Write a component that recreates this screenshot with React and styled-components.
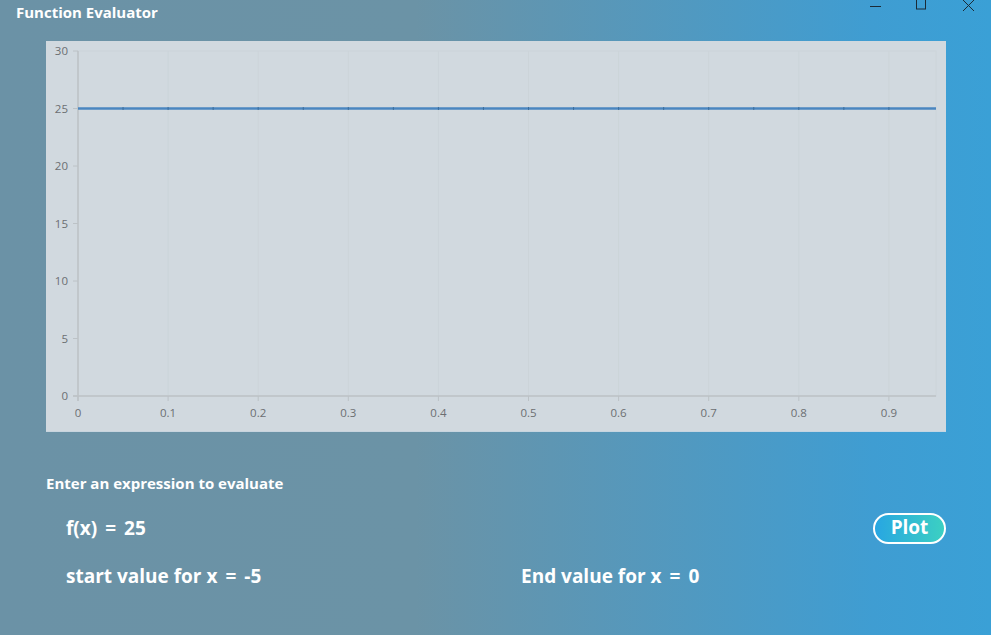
import React from 'react';
import styled, { createGlobalStyle } from 'styled-components';

const GlobalStyle = createGlobalStyle`
  html, body {
    margin: 0;
    padding: 0;
  }
  body {
    font-family: 'Open Sans', 'Noto Sans', sans-serif;
  }
`;

// Window

const Window = styled.div`
  width: 991px;
  height: 635px;
  overflow: hidden;
  background: linear-gradient(90deg, #6b92a6 0%, #6b93a6 42%, #3f9dd2 88%, #3aa0d6 100%);
  display: flex;
  flex-direction: column;
`;

const TitleBar = styled.div`
  height: 41px;
  display: flex;
  align-items: flex-start;
  justify-content: space-between;
`;

const Title = styled.h1`
  margin: 2px 0 0 16px;
  font-size: 15px;
  font-weight: 700;
  color: #fff;
`;

const Controls = styled.div`
  display: flex;
  align-items: flex-start;
`;

const ControlButton = styled.button`
  width: 46px;
  height: 20px;
  padding: 0;
  border: none;
  background: transparent;
  display: flex;
  align-items: flex-start;
  justify-content: center;
  color: #1b2b36;
`;

const ChartPanel = styled.div`
  margin-left: 46px;
  width: 900px;
  height: 390px;
  background: #d1d9df;
  box-shadow: 0 1px 0 rgba(210, 220, 228, 0.9);
`;

const Form = styled.section`
  padding: 42px 45px 0 46px;
  display: flex;
  flex-direction: column;
`;

const Prompt = styled.h2`
  margin: 0;
  font-size: 15px;
  font-weight: 700;
  color: #fff;
`;

const Row = styled.div`
  display: grid;
  grid-template-columns: ${(p) => p.$cols || '455px 1fr'};
  align-items: center;
  padding-left: 20px;
  margin-top: ${(p) => p.$top || 0}px;
  height: 34px;
`;

const Field = styled.span`
  display: flex;
  gap: 8px;
  font-size: 19px;
  font-weight: 700;
  color: #fff;
  white-space: nowrap;
`;

const PlotButton = styled.button`
  justify-self: end;
  width: 73px;
  height: 31px;
  border: 2px solid #fff;
  border-radius: 16px;
  background: linear-gradient(90deg, #28a6e2, #3cd0c2);
  color: #fff;
  font-family: inherit;
  font-size: 19px;
  font-weight: 700;
  line-height: 1;
  padding: 0 0 2px;
`;

// Chart drawing

const X0 = 32;
const Y0 = 355;
const XS = 901; // px per unit x
const YS = 11.5; // px per unit y
const XMAX = 890;

const Chart = () => {
  const xTicks = [0, 0.1, 0.2, 0.3, 0.4, 0.5, 0.6, 0.7, 0.8, 0.9];
  const yTicks = [0, 5, 10, 15, 20, 25, 30];
  const lineY = Y0 - 25 * YS;
  const markers = [];
  for (let i = 1; i < 19; i++) markers.push(X0 + i * 0.05 * XS);

  return (
    <svg width="900" height="390" style={{ display: 'block' }}>
      <rect x={X0} y={Y0 - 30 * YS} width={XMAX - X0} height={30 * YS} fill="none" stroke="#ccd4d9" />
      {xTicks.slice(1).map((t) => (
        <line key={t} x1={X0 + t * XS} x2={X0 + t * XS} y1={Y0 - 30 * YS} y2={Y0} stroke="#ccd4d9" />
      ))}
      <line x1={X0} x2={X0} y1={Y0 - 30 * YS} y2={Y0 + 5} stroke="#bcc2c6" strokeWidth="1.5" />
      <line x1={X0 - 5} x2={XMAX} y1={Y0} y2={Y0} stroke="#bcc2c6" strokeWidth="1.5" />
      {yTicks.map((t) => (
        <g key={t}>
          <line x1={X0 - 5} x2={X0} y1={Y0 - t * YS} y2={Y0 - t * YS} stroke="#bcc2c6" />
          <text
            x={X0 - 10}
            y={Y0 - t * YS + 4}
            textAnchor="end"
            fontSize="11.5"
            fill="#6c6f72"
            fontFamily="'Open Sans', sans-serif"
          >
            {t}
          </text>
        </g>
      ))}
      {xTicks.map((t) => (
        <g key={t}>
          <line x1={X0 + t * XS} x2={X0 + t * XS} y1={Y0} y2={Y0 + 5} stroke="#bcc2c6" />
          <text
            x={X0 + t * XS}
            y={Y0 + 21}
            textAnchor="middle"
            fontSize="11.5"
            fill="#6c6f72"
            fontFamily="'Open Sans', sans-serif"
          >
            {t}
          </text>
        </g>
      ))}
      <line x1={X0} x2={XMAX} y1={lineY} y2={lineY} stroke="#4a86c0" strokeWidth="2.5" />
      {markers.map((m) => (
        <line key={m} x1={m} x2={m} y1={lineY - 1.5} y2={lineY + 1.5} stroke="#3c6e9c" strokeWidth="1" />
      ))}
    </svg>
  );
};

const Equation = ({ label, value }) => (
  <Field>
    <span>{label}</span>
    <span>=</span>
    <span>{value}</span>
  </Field>
);

const App = () => (
  <>
    <GlobalStyle />
    <Window>
      <TitleBar>
        <Title>Function Evaluator</Title>
        <Controls>
          <ControlButton aria-label="minimize">
            <svg width="12" height="12" viewBox="0 0 12 12">
              <line x1="0" y1="6.5" x2="11" y2="6.5" stroke="currentColor" strokeWidth="1" />
            </svg>
          </ControlButton>
          <ControlButton aria-label="maximize">
            <svg width="12" height="12" viewBox="0 0 12 12">
              <rect x="0.5" y="-0.5" width="9" height="9.5" fill="none" stroke="currentColor" strokeWidth="1" />
            </svg>
          </ControlButton>
          <ControlButton aria-label="close">
            <svg width="13" height="13" viewBox="0 0 13 13">
              <path d="M1 0 L12 11 M12 0 L1 11" stroke="currentColor" strokeWidth="1" />
            </svg>
          </ControlButton>
        </Controls>
      </TitleBar>
      <ChartPanel>
        <Chart />
      </ChartPanel>
      <Form>
        <Prompt>Enter an expression to evaluate</Prompt>
        <Row $cols="1fr auto" $top={18}>
          <Equation label="f(x)" value="25" />
          <PlotButton>Plot</PlotButton>
        </Row>
        <Row $top={14}>
          <Equation label="start value for x" value="-5" />
          <Equation label="End value for x" value="0" />
        </Row>
      </Form>
    </Window>
  </>
);

export default App;
